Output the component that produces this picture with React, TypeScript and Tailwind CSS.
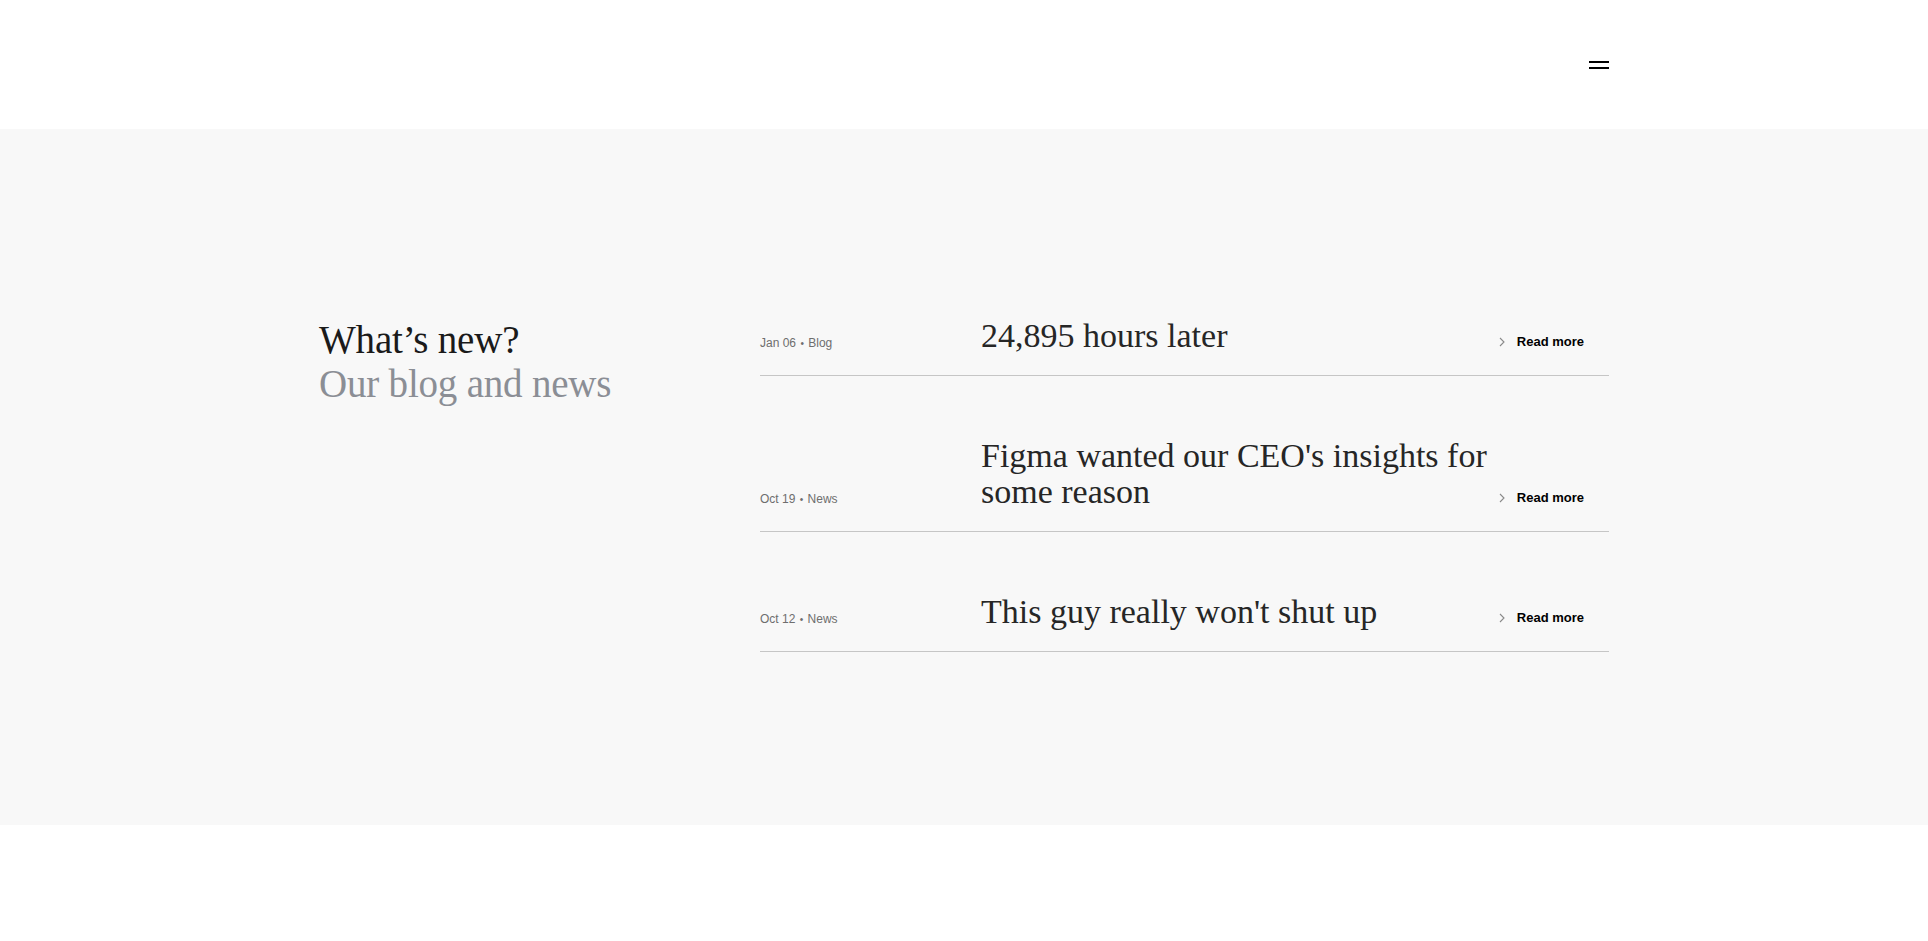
const posts = [
  { date: 'Jan 06', kind: 'Blog', title: '24,895 hours later' },
  { date: 'Oct 19', kind: 'News', title: "Figma wanted our CEO's insights for some reason" },
  { date: 'Oct 12', kind: 'News', title: "This guy really won't shut up" },
];

function Chevron() {
  return (
    <svg width="6" height="10" viewBox="0 0 6 10" fill="none" className="shrink-0">
      <path d="M1 1l4 4-4 4" stroke="#8a8a8a" strokeWidth="1.1" />
    </svg>
  );
}

export default function App() {
  return (
    <div className="min-h-[941px] bg-white font-['Liberation_Sans',Arial,sans-serif]">
      <header className="h-[129px] bg-white">
        <div className="mx-auto flex h-full w-[1290px] items-center justify-end">
          <button type="button" className="flex w-5 flex-col gap-1" aria-label="Menu">
            <span className="block h-[2px] w-5 bg-black" />
            <span className="block h-[2px] w-5 bg-black" />
          </button>
        </div>
      </header>

      <section className="bg-[#f8f8f8] pt-[189px] pb-[173px]">
        <div className="mx-auto grid w-[1290px] grid-cols-[441px_1fr] items-start">
          <h2 className="font-['Liberation_Serif',Georgia,serif] text-[39px] leading-[44px] font-normal tracking-[-0.2px]">
            <span className="block text-[#1a1a1a]">What’s new?</span>
            <span className="block text-[#8b8e95]">Our blog and news</span>
          </h2>

          <ul>
            {posts.map((p, i) => (
              <li
                key={p.title}
                className={`flex items-end border-b border-[#c6c6c6] pb-[21px] ${i === 0 ? '' : 'pt-[62px]'}`}
              >
                <div className="w-[221px] shrink-0 pb-[2px] text-[12px] leading-4 text-[#6e6e6e]">
                  {p.date} <span className="mx-[1px] text-[10px]">•</span> {p.kind}
                </div>
                <h3 className="flex-1 pr-2 font-['Liberation_Serif',Georgia,serif] text-[34px] leading-9 font-normal text-[#262626]">
                  {p.title}
                </h3>
                <a href="#" className="flex shrink-0 items-center gap-[12px] pr-[25px] pb-[2px] text-[13px] leading-5 font-bold text-black">
                  <Chevron />
                  Read more
                </a>
              </li>
            ))}
          </ul>
        </div>
      </section>
    </div>
  );
}
